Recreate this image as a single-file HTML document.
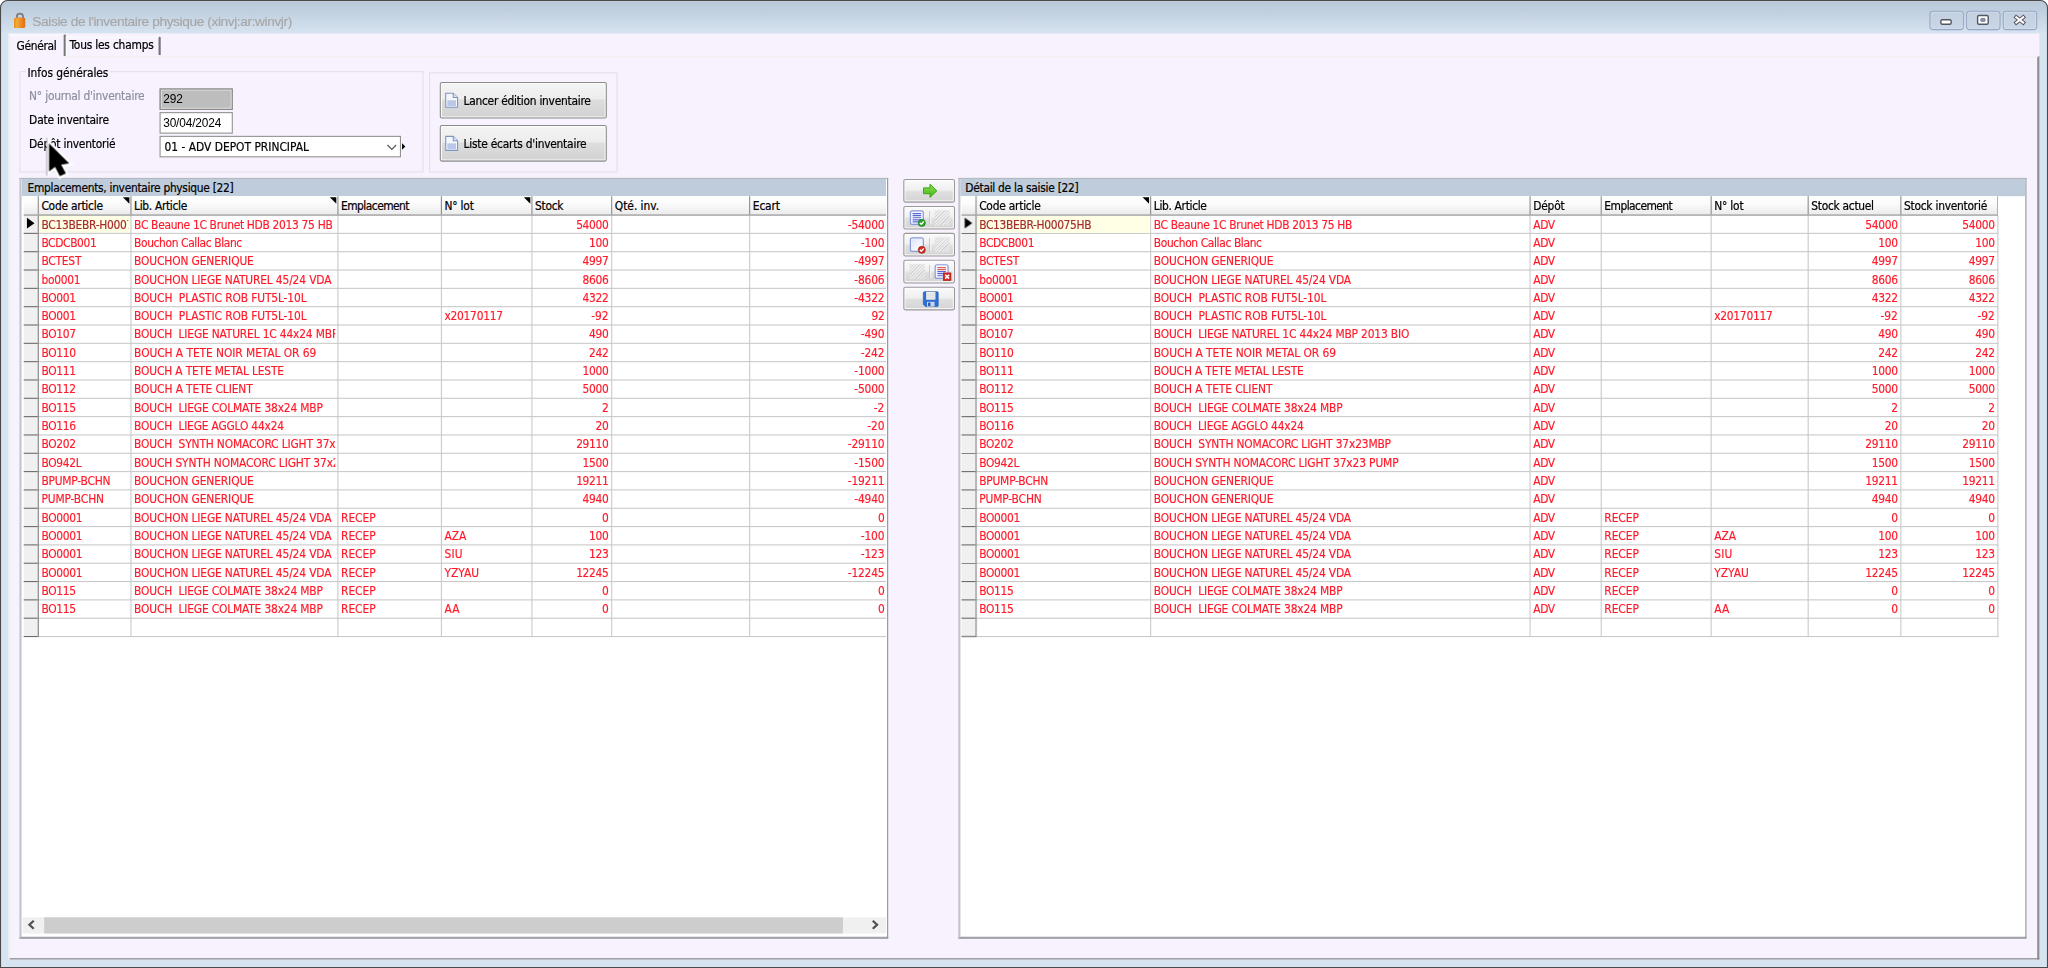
<!DOCTYPE html>
<html lang="fr"><head><meta charset="utf-8"><title>Saisie de l'inventaire physique</title>
<style>
html,body{margin:0;padding:0;}
body{width:2048px;height:968px;overflow:hidden;background:#fff;position:relative;font-family:"DejaVu Sans Condensed","Liberation Sans",sans-serif;}
#root{position:absolute;left:0;top:0;width:1900px;height:898px;transform:scale(1.0778947,1.0779510);transform-origin:0 0;font-size:11px;color:#000;overflow:hidden;}
#root div{position:absolute;box-sizing:border-box;}
#win{left:0;top:0;width:1900px;height:898px;border:1.2px solid #4a4a4a;border-radius:7px 7px 0 0;background:linear-gradient(#b9c8d9 0px,#c3d2e1 12px,#d6e3f1 30px,#d6e3f1 100%);}
#client{left:8px;top:30.9px;width:1884px;height:858.7px;background:#f7f2fd;}
#title{left:30px;top:11.6px;font-family:"Liberation Sans",sans-serif;font-size:12.7px;line-height:16px;color:#a6a6a6;white-space:pre;letter-spacing:-0.36px;-webkit-text-stroke:0.12px #a6a6a6;}
.cap{top:9.9px;width:32px;height:18px;border:1.2px solid #98a8c4;border-radius:3.5px;background:linear-gradient(#c2cfe0,#cad7e7);box-shadow:inset 0 0 0 0.8px #d3deec;}
/* tabs */
#tabline{left:8px;top:51.5px;width:1884px;height:1px;background:#fbfbfb;}
#tabpanelL{left:7.5px;top:30.9px;width:2.2px;height:859px;background:#f1f1f1;}
#tabpanelR{left:1890.3px;top:52px;width:1.4px;height:838px;background:#8d8d8d;}
#tabpanelB{left:8.5px;top:888.6px;width:1883.5px;height:1.3px;background:#7d7d7d;}
.tab{top:36.2px;height:16px;line-height:14px;font-size:11px;white-space:pre;-webkit-text-stroke:0.2px #000;}
.lbl{-webkit-text-stroke:0.18px currentColor;font-size:11px;line-height:14px;white-space:pre;margin-top:0.8px;}
.gb{border:1px solid #e4dfe9;}
.fld{border:1px solid #8f8f8f;background:#fff;font-family:"Liberation Sans",sans-serif;font-size:11px;line-height:16px;padding-left:3px;}
.btn{border:1px solid #8c8c8c;border-radius:2px;background:linear-gradient(#f4f4f4 0%,#ededed 45%,#dddddd 50%,#d2d2d2 100%);box-shadow:inset 0 0 0 1px #fbfbfb;}
.btxt{-webkit-text-stroke:0.18px #000;font-size:11px;line-height:14px;white-space:pre;margin-top:0.8px;}
/* panels */
.panel{background:#fff;border-left:2px solid #c3c3cc;border-top:1px solid #b0b4bc;border-right:1.4px solid #8e8e96;border-bottom:2px solid #a1a1a8;}
.band{background:#bfccdb;height:16.2px;}
.bandt{-webkit-text-stroke:0.18px #000;font-size:11px;line-height:14px;white-space:pre;margin-top:1px;}
.gh{background:linear-gradient(#ffffff 0%,#fafafa 45%,#ebebeb 100%);}
.ind{background:#f0f0f0;}
.cur{background:#ffffe6;}
.hl{height:1px;background:#c9c9c9;}
.hld{height:1px;background:#6a6a6a;}
.vl{width:1px;background:#c9c9c9;}
.vld{width:1px;background:#7a7a7a;}
.hvl{width:1px;background:#8a8a8a;}
.hbl{height:1.5px;background:#858585;margin-top:0.5px;}
.ht{height:17px;line-height:20px;padding-left:0.4px;-webkit-text-stroke:0.2px #000;font-size:11px;white-space:pre;overflow:hidden;color:#000;}
.tri{width:0;height:0;border-top:6px solid #000;border-left:6px solid transparent;}
.ptr{width:0;height:0;border-left:7.3px solid #000;border-top:5.5px solid transparent;border-bottom:5.5px solid transparent;}
.c{height:16px;line-height:18px;font-size:11px;white-space:pre;overflow:hidden;color:#ff1a2a;padding-left:2.4px;-webkit-text-stroke:0.15px #ff1a2a;}
.c.r{text-align:right;padding-left:0;padding-right:2.5px;}
.c.cu{color:#a52a2a;-webkit-text-stroke:0.15px #a52a2a;}
.sbtn{left:838px;width:47.6px;height:21.6px;border:1px solid #9a9a9a;border-radius:2px;background:linear-gradient(#fafafa 0%,#f0f0f0 45%,#dfdfdf 55%,#d4d4d4 100%);box-shadow:inset 0 0 0 1px #fdfdfd;}
#root svg{position:absolute;overflow:visible;}
.hatch{width:14.5px;height:14px;background:repeating-linear-gradient(135deg,#d2d2d2 0,#d2d2d2 0.8px,#ececec 0.8px,#ececec 2.2px);opacity:.85;}
.combo{-webkit-text-stroke:0.18px #000;font-size:11px;line-height:18px;white-space:pre;margin-top:0.7px;}

</style></head>
<body>
<div id="root">
<div id="win"></div>
<div id="client"></div>
<svg style="left:12px;top:11px" width="13" height="16" viewBox="0 0 13 16"><defs><linearGradient id="lk" x1="0" y1="0" x2="1" y2="0"><stop offset="0" stop-color="#e88a1c"/><stop offset="0.25" stop-color="#f2ae34"/><stop offset="0.6" stop-color="#ee8a26"/><stop offset="1" stop-color="#d86f18"/></linearGradient></defs><path d="M3.6 7.2 V4.6 a2.9 2.9 0 0 1 5.8 0 V7.2" fill="none" stroke="#7d7d7d" stroke-width="1.7"/><path d="M1 5.6 H11.4 V14 L10.4 15 H1 Z" fill="url(#lk)"/><path d="M4.2 5.2 H8.8 V6.4 H4.2 Z" fill="#ef8e28"/></svg>
<div id="title">Saisie de l'inventaire physique (xinvj:ar:winvjr)</div>
<div class="cap" style="left:1790px"></div>
<div class="cap" style="left:1824px"></div>
<div class="cap" style="left:1858px"></div>
<svg style="left:1790px;top:10px" width="100" height="18" viewBox="0 0 100 18">
<rect x="10.6" y="8.3" width="9.6" height="4.2" rx="1.4" fill="#fff" stroke="#55555f" stroke-width="1.3"/>
<rect x="44.7" y="4.4" width="9.8" height="8.1" rx="1.2" fill="#fff" stroke="#55555f" stroke-width="1.3"/><rect x="47.6" y="7.2" width="4" height="2.6" rx="0.6" fill="#8f9bb4" stroke="#5d6478" stroke-width="0.7"/>
<path d="M80.6 6 L87 11 M87 6 L80.6 11" fill="none" stroke="#55555f" stroke-width="3.7" stroke-linecap="square"/>
<path d="M80.6 6 L87 11 M87 6 L80.6 11" fill="none" stroke="#fff" stroke-width="1.9" stroke-linecap="square"/>
</svg>
<div id="tabpanelL"></div>

<div id="tabpanelR"></div>
<div id="tabpanelB"></div>
<div class="tab" style="left:15.3px;letter-spacing:-0.288px">Général</div>
<div style="left:8.8px;top:31.8px;width:51px;height:1.3px;background:#fbfbfb"></div>
<div style="left:58.9px;top:32.2px;width:2px;height:19.8px;background:linear-gradient(90deg,#8a8a8a,#5c5c5c);border-radius:1px 1px 0 0"></div>
<div class="tab" style="left:64.5px;top:34.8px;letter-spacing:-0.188px">Tous les champs</div>
<div style="left:61px;top:34.1px;width:86px;height:1.1px;background:#fbfbfb"></div>
<div style="left:61px;top:34.1px;width:1.1px;height:17.5px;background:#fbfbfb"></div>
<div style="left:146.6px;top:34.3px;width:2px;height:16.6px;background:linear-gradient(90deg,#8a8a8a,#5c5c5c);border-radius:1px 1px 0 0"></div>
<div style="left:61px;top:51.8px;width:1830px;height:1.1px;background:#f0f0f0"></div>

<!-- group boxes -->
<div class="gb" style="left:18.2px;top:66px;width:375px;height:93.5px"></div>
<div style="left:24px;top:60px;width:78px;height:14px;background:#f7f2fd"></div>
<div class="lbl" style="left:25.5px;top:60.3px;letter-spacing:-0.059px">Infos générales</div>
<div class="lbl" style="left:27px;top:82px;color:#8d8f9e;letter-spacing:-0.197px">N° journal d'inventaire</div>
<div class="lbl" style="left:27px;top:104px;letter-spacing:-0.177px">Date inventaire</div>
<div class="lbl" style="left:27px;top:126px;letter-spacing:-0.197px">Dépôt inventorié</div>
<div class="fld" style="left:148px;top:82px;width:67.8px;height:20px;background:#bdbdbd;border-color:#8a8a8a;box-shadow:inset 0 0 0 1px #e3e3e3;line-height:19px;padding-left:2.4px">292</div>
<div class="fld" style="left:148px;top:104.3px;width:67.8px;height:19.7px;line-height:18.6px;padding-left:2.4px;letter-spacing:-0.12px">30/04/2024</div>
<div class="fld" style="left:148px;top:126.3px;width:224px;height:19.8px"></div>
<div class="combo" style="left:152.6px;top:127.3px;letter-spacing:0.004px">01 - ADV DEPOT PRINCIPAL</div>
<svg style="left:358px;top:133px" width="12" height="8" viewBox="0 0 12 8"><path d="M1.5 1.5 L5.5 5.5 L9.5 1.5" fill="none" stroke="#555" stroke-width="1.1"/></svg>
<div style="left:373px;top:133px;width:0;height:0;border-left:3.5px solid #000;border-top:3.5px solid transparent;border-bottom:3.5px solid transparent"></div>
<div class="gb" style="left:398px;top:67px;width:175px;height:92.5px"></div>
<div class="btn" style="left:408px;top:76px;width:154.7px;height:34px"></div>
<div class="btn" style="left:408px;top:116px;width:154.7px;height:34px"></div>
<svg style="left:412px;top:85px" width="14" height="16" viewBox="0 0 14 16"><path d="M1.5 1.5 H8.5 L12.5 5.5 V14.5 H1.5 Z" fill="#f4f7fc" stroke="#7e94c4" stroke-width="1"/><path d="M8.5 1.5 V5.5 H12.5" fill="#dfe7f5" stroke="#7e94c4" stroke-width="1"/><rect x="3" y="8" width="8" height="5.5" fill="#b9c8e8"/></svg>
<svg style="left:412px;top:125px" width="14" height="16" viewBox="0 0 14 16"><path d="M1.5 1.5 H8.5 L12.5 5.5 V14.5 H1.5 Z" fill="#f4f7fc" stroke="#7e94c4" stroke-width="1"/><path d="M8.5 1.5 V5.5 H12.5" fill="#dfe7f5" stroke="#7e94c4" stroke-width="1"/><rect x="3" y="8" width="8" height="5.5" fill="#b9c8e8"/></svg>
<div class="btxt" style="left:430px;top:86px;letter-spacing:-0.227px">Lancer édition inventaire</div>
<div class="btxt" style="left:430px;top:126px;letter-spacing:-0.209px">Liste écarts d'inventaire</div>

<!-- left panel -->
<div class="panel" style="left:18.3px;top:164.5px;width:805.4px;height:706px"></div>
<div class="band" style="left:20.2px;top:165.6px;width:802.3px"></div>
<div class="bandt" style="left:25.5px;top:166.5px;letter-spacing:-0.270px">Emplacements, inventaire physique [22]</div>
<div id="lclip" style="left:20.5px;top:0;width:801.8px;height:898px;overflow:hidden"><div style="left:-20.5px;top:0;width:1900px;height:898px">
<div class="gh" style="left:21.5px;top:182.3px;width:801.5px;height:17.0px"></div>
<div class="ind" style="left:21.5px;top:200.3px;width:13.5px;height:390.99999999999994px"></div>
<div class="cur" style="left:36px;top:200.3px;width:85px;height:16px"></div>
<div class="hl" style="left:35px;top:216.3px;width:789px"></div>
<div class="hld" style="left:21.5px;top:216.3px;width:13.5px"></div>
<div class="hl" style="left:35px;top:233.3px;width:789px"></div>
<div class="hld" style="left:21.5px;top:233.3px;width:13.5px"></div>
<div class="hl" style="left:35px;top:250.3px;width:789px"></div>
<div class="hld" style="left:21.5px;top:250.3px;width:13.5px"></div>
<div class="hl" style="left:35px;top:267.3px;width:789px"></div>
<div class="hld" style="left:21.5px;top:267.3px;width:13.5px"></div>
<div class="hl" style="left:35px;top:284.3px;width:789px"></div>
<div class="hld" style="left:21.5px;top:284.3px;width:13.5px"></div>
<div class="hl" style="left:35px;top:301.3px;width:789px"></div>
<div class="hld" style="left:21.5px;top:301.3px;width:13.5px"></div>
<div class="hl" style="left:35px;top:318.3px;width:789px"></div>
<div class="hld" style="left:21.5px;top:318.3px;width:13.5px"></div>
<div class="hl" style="left:35px;top:335.3px;width:789px"></div>
<div class="hld" style="left:21.5px;top:335.3px;width:13.5px"></div>
<div class="hl" style="left:35px;top:352.3px;width:789px"></div>
<div class="hld" style="left:21.5px;top:352.3px;width:13.5px"></div>
<div class="hl" style="left:35px;top:369.3px;width:789px"></div>
<div class="hld" style="left:21.5px;top:369.3px;width:13.5px"></div>
<div class="hl" style="left:35px;top:386.3px;width:789px"></div>
<div class="hld" style="left:21.5px;top:386.3px;width:13.5px"></div>
<div class="hl" style="left:35px;top:403.3px;width:789px"></div>
<div class="hld" style="left:21.5px;top:403.3px;width:13.5px"></div>
<div class="hl" style="left:35px;top:420.3px;width:789px"></div>
<div class="hld" style="left:21.5px;top:420.3px;width:13.5px"></div>
<div class="hl" style="left:35px;top:437.3px;width:789px"></div>
<div class="hld" style="left:21.5px;top:437.3px;width:13.5px"></div>
<div class="hl" style="left:35px;top:454.3px;width:789px"></div>
<div class="hld" style="left:21.5px;top:454.3px;width:13.5px"></div>
<div class="hl" style="left:35px;top:471.3px;width:789px"></div>
<div class="hld" style="left:21.5px;top:471.3px;width:13.5px"></div>
<div class="hl" style="left:35px;top:488.3px;width:789px"></div>
<div class="hld" style="left:21.5px;top:488.3px;width:13.5px"></div>
<div class="hl" style="left:35px;top:505.3px;width:789px"></div>
<div class="hld" style="left:21.5px;top:505.3px;width:13.5px"></div>
<div class="hl" style="left:35px;top:522.3px;width:789px"></div>
<div class="hld" style="left:21.5px;top:522.3px;width:13.5px"></div>
<div class="hl" style="left:35px;top:539.3px;width:789px"></div>
<div class="hld" style="left:21.5px;top:539.3px;width:13.5px"></div>
<div class="hl" style="left:35px;top:556.3px;width:789px"></div>
<div class="hld" style="left:21.5px;top:556.3px;width:13.5px"></div>
<div class="hl" style="left:35px;top:573.3px;width:789px"></div>
<div class="hld" style="left:21.5px;top:573.3px;width:13.5px"></div>
<div class="hl" style="left:35px;top:590.3px;width:789px"></div>
<div class="hld" style="left:21.5px;top:590.3px;width:13.5px"></div>
<div class="vld" style="left:35px;top:200.3px;height:390.99999999999994px"></div>
<div class="vl" style="left:121px;top:200.3px;height:390.99999999999994px"></div>
<div class="vl" style="left:313px;top:200.3px;height:390.99999999999994px"></div>
<div class="vl" style="left:409px;top:200.3px;height:390.99999999999994px"></div>
<div class="vl" style="left:493px;top:200.3px;height:390.99999999999994px"></div>
<div class="vl" style="left:567px;top:200.3px;height:390.99999999999994px"></div>
<div class="vl" style="left:695px;top:200.3px;height:390.99999999999994px"></div>
<div class="vl" style="left:823px;top:200.3px;height:390.99999999999994px"></div>
<div class="hvl" style="left:35px;top:182.3px;height:17.0px"></div>
<div class="hvl" style="left:121px;top:182.3px;height:17.0px"></div>
<div class="hvl" style="left:313px;top:182.3px;height:17.0px"></div>
<div class="hvl" style="left:409px;top:182.3px;height:17.0px"></div>
<div class="hvl" style="left:493px;top:182.3px;height:17.0px"></div>
<div class="hvl" style="left:567px;top:182.3px;height:17.0px"></div>
<div class="hvl" style="left:695px;top:182.3px;height:17.0px"></div>
<div class="hvl" style="left:823px;top:182.3px;height:17.0px"></div>
<div class="hbl" style="left:21.5px;top:198.3px;width:802.5px"></div>
<div class="ht" style="left:38px;top:182.3px;width:83px;letter-spacing:-0.211px">Code article</div>
<div class="tri" style="left:114px;top:183.3px"></div>
<div class="ht" style="left:124px;top:182.3px;width:189px;letter-spacing:-0.298px">Lib. Article</div>
<div class="tri" style="left:306px;top:183.3px"></div>
<div class="ht" style="left:316px;top:182.3px;width:93px;letter-spacing:-0.491px">Emplacement</div>
<div class="ht" style="left:412px;top:182.3px;width:81px;letter-spacing:-0.195px">N° lot</div>
<div class="tri" style="left:486px;top:183.3px"></div>
<div class="ht" style="left:496px;top:182.3px;width:71px;letter-spacing:-0.278px">Stock</div>
<div class="ht" style="left:570px;top:182.3px;width:125px;letter-spacing:-0.024px">Qté. inv.</div>
<div class="ht" style="left:698px;top:182.3px;width:125px;letter-spacing:-0.141px">Ecart</div>
<div class="ptr" style="left:25.3px;top:202.3px"></div>
<div class="c cu" style="left:36px;top:200.3px;width:83px;letter-spacing:-0.251px">BC13BEBR-H000<span>75HB</span></div>
<div class="c" style="left:122px;top:200.3px;width:189px;letter-spacing:-0.280px">BC Beaune 1C Brunet HDB 2013 75 HB</div>
<div class="c r" style="left:494px;top:200.3px;width:73px;letter-spacing:-0.297px">54000</div>
<div class="c r" style="left:696px;top:200.3px;width:127px;letter-spacing:-0.174px">-54000</div>
<div class="c" style="left:36px;top:217.3px;width:83px;letter-spacing:-0.340px">BCDCB001</div>
<div class="c" style="left:122px;top:217.3px;width:189px;letter-spacing:-0.338px">Bouchon Callac Blanc</div>
<div class="c r" style="left:494px;top:217.3px;width:73px;letter-spacing:-0.297px">100</div>
<div class="c r" style="left:696px;top:217.3px;width:127px;letter-spacing:-0.117px">-100</div>
<div class="c" style="left:36px;top:234.3px;width:83px;letter-spacing:-0.190px">BCTEST</div>
<div class="c" style="left:122px;top:234.3px;width:189px;letter-spacing:-0.117px">BOUCHON GENERIQUE</div>
<div class="c r" style="left:494px;top:234.3px;width:73px;letter-spacing:-0.297px">4997</div>
<div class="c r" style="left:696px;top:234.3px;width:127px;letter-spacing:-0.153px">-4997</div>
<div class="c" style="left:36px;top:251.3px;width:83px;letter-spacing:-0.255px">bo0001</div>
<div class="c" style="left:122px;top:251.3px;width:189px;letter-spacing:-0.132px">BOUCHON LIEGE NATUREL 45/24 VDA</div>
<div class="c r" style="left:494px;top:251.3px;width:73px;letter-spacing:-0.297px">8606</div>
<div class="c r" style="left:696px;top:251.3px;width:127px;letter-spacing:-0.153px">-8606</div>
<div class="c" style="left:36px;top:268.3px;width:83px;letter-spacing:-0.256px">BO001</div>
<div class="c" style="left:122px;top:268.3px;width:189px;letter-spacing:-0.105px">BOUCH  PLASTIC ROB FUT5L-10L</div>
<div class="c r" style="left:494px;top:268.3px;width:73px;letter-spacing:-0.297px">4322</div>
<div class="c r" style="left:696px;top:268.3px;width:127px;letter-spacing:-0.153px">-4322</div>
<div class="c" style="left:36px;top:285.3px;width:83px;letter-spacing:-0.256px">BO001</div>
<div class="c" style="left:122px;top:285.3px;width:189px;letter-spacing:-0.105px">BOUCH  PLASTIC ROB FUT5L-10L</div>
<div class="c" style="left:410px;top:285.3px;width:81px;letter-spacing:-0.247px">x20170117</div>
<div class="c r" style="left:494px;top:285.3px;width:73px;letter-spacing:-0.057px">-92</div>
<div class="c r" style="left:696px;top:285.3px;width:127px;letter-spacing:-0.297px">92</div>
<div class="c" style="left:36px;top:302.3px;width:83px;letter-spacing:-0.256px">BO107</div>
<div class="c" style="left:122px;top:302.3px;width:189px;letter-spacing:-0.147px">BOUCH  LIEGE NATUREL 1C 44x24 MBP 2013 BIO</div>
<div class="c r" style="left:494px;top:302.3px;width:73px;letter-spacing:-0.297px">490</div>
<div class="c r" style="left:696px;top:302.3px;width:127px;letter-spacing:-0.117px">-490</div>
<div class="c" style="left:36px;top:319.3px;width:83px;letter-spacing:-0.256px">BO110</div>
<div class="c" style="left:122px;top:319.3px;width:189px;letter-spacing:-0.059px">BOUCH A TETE NOIR METAL OR 69</div>
<div class="c r" style="left:494px;top:319.3px;width:73px;letter-spacing:-0.297px">242</div>
<div class="c r" style="left:696px;top:319.3px;width:127px;letter-spacing:-0.117px">-242</div>
<div class="c" style="left:36px;top:336.3px;width:83px;letter-spacing:-0.256px">BO111</div>
<div class="c" style="left:122px;top:336.3px;width:189px;letter-spacing:-0.146px">BOUCH A TETE METAL LESTE</div>
<div class="c r" style="left:494px;top:336.3px;width:73px;letter-spacing:-0.297px">1000</div>
<div class="c r" style="left:696px;top:336.3px;width:127px;letter-spacing:-0.153px">-1000</div>
<div class="c" style="left:36px;top:353.3px;width:83px;letter-spacing:-0.256px">BO112</div>
<div class="c" style="left:122px;top:353.3px;width:189px;letter-spacing:-0.095px">BOUCH A TETE CLIENT</div>
<div class="c r" style="left:494px;top:353.3px;width:73px;letter-spacing:-0.297px">5000</div>
<div class="c r" style="left:696px;top:353.3px;width:127px;letter-spacing:-0.153px">-5000</div>
<div class="c" style="left:36px;top:370.3px;width:83px;letter-spacing:-0.256px">BO115</div>
<div class="c" style="left:122px;top:370.3px;width:189px;letter-spacing:-0.153px">BOUCH  LIEGE COLMATE 38x24 MBP</div>
<div class="c r" style="left:494px;top:370.3px;width:73px;letter-spacing:-0.297px">2</div>
<div class="c r" style="left:696px;top:370.3px;width:127px;letter-spacing:0.062px">-2</div>
<div class="c" style="left:36px;top:387.3px;width:83px;letter-spacing:-0.256px">BO116</div>
<div class="c" style="left:122px;top:387.3px;width:189px;letter-spacing:-0.167px">BOUCH  LIEGE AGGLO 44x24</div>
<div class="c r" style="left:494px;top:387.3px;width:73px;letter-spacing:-0.297px">20</div>
<div class="c r" style="left:696px;top:387.3px;width:127px;letter-spacing:-0.057px">-20</div>
<div class="c" style="left:36px;top:404.3px;width:83px;letter-spacing:-0.256px">BO202</div>
<div class="c" style="left:122px;top:404.3px;width:189px;letter-spacing:-0.141px">BOUCH  SYNTH NOMACORC LIGHT 37x23MBP</div>
<div class="c r" style="left:494px;top:404.3px;width:73px;letter-spacing:-0.297px">29110</div>
<div class="c r" style="left:696px;top:404.3px;width:127px;letter-spacing:-0.174px">-29110</div>
<div class="c" style="left:36px;top:421.3px;width:83px;letter-spacing:-0.297px">BO942L</div>
<div class="c" style="left:122px;top:421.3px;width:189px;letter-spacing:-0.122px">BOUCH SYNTH NOMACORC LIGHT 37x23 PUMP</div>
<div class="c r" style="left:494px;top:421.3px;width:73px;letter-spacing:-0.297px">1500</div>
<div class="c r" style="left:696px;top:421.3px;width:127px;letter-spacing:-0.153px">-1500</div>
<div class="c" style="left:36px;top:438.3px;width:83px;letter-spacing:-0.181px">BPUMP-BCHN</div>
<div class="c" style="left:122px;top:438.3px;width:189px;letter-spacing:-0.117px">BOUCHON GENERIQUE</div>
<div class="c r" style="left:494px;top:438.3px;width:73px;letter-spacing:-0.297px">19211</div>
<div class="c r" style="left:696px;top:438.3px;width:127px;letter-spacing:-0.174px">-19211</div>
<div class="c" style="left:36px;top:455.3px;width:83px;letter-spacing:-0.113px">PUMP-BCHN</div>
<div class="c" style="left:122px;top:455.3px;width:189px;letter-spacing:-0.117px">BOUCHON GENERIQUE</div>
<div class="c r" style="left:494px;top:455.3px;width:73px;letter-spacing:-0.297px">4940</div>
<div class="c r" style="left:696px;top:455.3px;width:127px;letter-spacing:-0.153px">-4940</div>
<div class="c" style="left:36px;top:472.3px;width:83px;letter-spacing:-0.263px">BO0001</div>
<div class="c" style="left:122px;top:472.3px;width:189px;letter-spacing:-0.132px">BOUCHON LIEGE NATUREL 45/24 VDA</div>
<div class="c" style="left:314px;top:472.3px;width:93px;letter-spacing:-0.053px">RECEP</div>
<div class="c r" style="left:494px;top:472.3px;width:73px;letter-spacing:-0.297px">0</div>
<div class="c r" style="left:696px;top:472.3px;width:127px;letter-spacing:-0.297px">0</div>
<div class="c" style="left:36px;top:489.3px;width:83px;letter-spacing:-0.263px">BO0001</div>
<div class="c" style="left:122px;top:489.3px;width:189px;letter-spacing:-0.132px">BOUCHON LIEGE NATUREL 45/24 VDA</div>
<div class="c" style="left:314px;top:489.3px;width:93px;letter-spacing:-0.053px">RECEP</div>
<div class="c" style="left:410px;top:489.3px;width:81px;letter-spacing:-0.109px">AZA</div>
<div class="c r" style="left:494px;top:489.3px;width:73px;letter-spacing:-0.297px">100</div>
<div class="c r" style="left:696px;top:489.3px;width:127px;letter-spacing:-0.117px">-100</div>
<div class="c" style="left:36px;top:506.3px;width:83px;letter-spacing:-0.263px">BO0001</div>
<div class="c" style="left:122px;top:506.3px;width:189px;letter-spacing:-0.132px">BOUCHON LIEGE NATUREL 45/24 VDA</div>
<div class="c" style="left:314px;top:506.3px;width:93px;letter-spacing:-0.053px">RECEP</div>
<div class="c" style="left:410px;top:506.3px;width:81px;letter-spacing:0.182px">SIU</div>
<div class="c r" style="left:494px;top:506.3px;width:73px;letter-spacing:-0.297px">123</div>
<div class="c r" style="left:696px;top:506.3px;width:127px;letter-spacing:-0.117px">-123</div>
<div class="c" style="left:36px;top:523.3px;width:83px;letter-spacing:-0.263px">BO0001</div>
<div class="c" style="left:122px;top:523.3px;width:189px;letter-spacing:-0.132px">BOUCHON LIEGE NATUREL 45/24 VDA</div>
<div class="c" style="left:314px;top:523.3px;width:93px;letter-spacing:-0.053px">RECEP</div>
<div class="c" style="left:410px;top:523.3px;width:81px;letter-spacing:-0.006px">YZYAU</div>
<div class="c r" style="left:494px;top:523.3px;width:73px;letter-spacing:-0.297px">12245</div>
<div class="c r" style="left:696px;top:523.3px;width:127px;letter-spacing:-0.174px">-12245</div>
<div class="c" style="left:36px;top:540.3px;width:83px;letter-spacing:-0.256px">BO115</div>
<div class="c" style="left:122px;top:540.3px;width:189px;letter-spacing:-0.153px">BOUCH  LIEGE COLMATE 38x24 MBP</div>
<div class="c" style="left:314px;top:540.3px;width:93px;letter-spacing:-0.053px">RECEP</div>
<div class="c r" style="left:494px;top:540.3px;width:73px;letter-spacing:-0.297px">0</div>
<div class="c r" style="left:696px;top:540.3px;width:127px;letter-spacing:-0.297px">0</div>
<div class="c" style="left:36px;top:557.3px;width:83px;letter-spacing:-0.256px">BO115</div>
<div class="c" style="left:122px;top:557.3px;width:189px;letter-spacing:-0.153px">BOUCH  LIEGE COLMATE 38x24 MBP</div>
<div class="c" style="left:314px;top:557.3px;width:93px;letter-spacing:-0.053px">RECEP</div>
<div class="c" style="left:410px;top:557.3px;width:81px;letter-spacing:0.078px">AA</div>
<div class="c r" style="left:494px;top:557.3px;width:73px;letter-spacing:-0.297px">0</div>
<div class="c r" style="left:696px;top:557.3px;width:127px;letter-spacing:-0.297px">0</div>
</div></div>
<!-- left scrollbar -->
<div style="left:20.6px;top:851.2px;width:801.6px;height:15px;background:#f0f0f0"></div>
<div style="left:40.8px;top:851.2px;width:741px;height:15px;background:#cdcdcd"></div>
<svg style="left:25px;top:853.3px" width="8" height="10" viewBox="0 0 8 10"><path d="M6.3 1.2 L2.3 4.9 L6.3 8.6" fill="none" stroke="#505050" stroke-width="2.1"/></svg>
<svg style="left:808px;top:853.3px" width="8" height="10" viewBox="0 0 8 10"><path d="M1.7 1.2 L5.7 4.9 L1.7 8.6" fill="none" stroke="#505050" stroke-width="2.1"/></svg>

<!-- middle buttons -->
<div class="sbtn" style="top:166.2px"></div>
<div class="sbtn" style="top:191.2px"></div>
<div class="sbtn" style="top:216.2px"></div>
<div class="sbtn" style="top:241.2px"></div>
<div class="sbtn" style="top:266px"></div>
<svg style="left:856.3px;top:169.8px" width="14" height="14" viewBox="0 0 14 14"><defs><linearGradient id="ga" x1="0" y1="0" x2="0" y2="1"><stop offset="0" stop-color="#8fe24f"/><stop offset="1" stop-color="#3fb416"/></linearGradient></defs><path d="M0.8 4.3 H6.8 V0.9 L13.2 7 L6.8 13.1 V9.7 H0.8 Z" fill="url(#ga)" stroke="#3aa016" stroke-width="0.9" stroke-linejoin="round"/></svg>
<svg style="left:843.8px;top:194.8px" width="16" height="16" viewBox="0 0 16 16"><rect x="0.6" y="0.6" width="12" height="12.6" rx="1.8" fill="#eef2ff" stroke="#8a9ad8" stroke-width="1.1"/><rect x="2" y="2" width="9.2" height="9.8" fill="#fff"/><path d="M2.6 3.2H10.6M2.6 5.1H10.6M2.6 7H10.6M2.6 8.9H10.6M2.6 10.8H10.6" stroke="#5a66d6" stroke-width="1.1"/><circle cx="11.2" cy="11.8" r="3.3" fill="#2ca02c" stroke="#1d7a1d" stroke-width="0.6"/><path d="M9.4 11.8 L10.8 13.1 L13.1 10.4" fill="none" stroke="#fff" stroke-width="1.3"/></svg>
<div style="left:861.5px;top:196px;width:1px;height:12px;background:#c4c4c4"></div><div style="left:862.5px;top:196px;width:1px;height:12px;background:#f8f8f8"></div>
<div class="hatch" style="left:866.6px;top:194.9px"></div>
<svg style="left:843.8px;top:219.8px" width="16" height="16" viewBox="0 0 16 16"><defs><linearGradient id="gb1" x1="0" y1="0" x2="1" y2="1"><stop offset="0" stop-color="#dfe8fb"/><stop offset="1" stop-color="#ffffff"/></linearGradient></defs><rect x="0.6" y="0.6" width="12" height="12.6" rx="1.8" fill="#eef2ff" stroke="#8a9ad8" stroke-width="1.1"/><rect x="2" y="2" width="9.2" height="9.8" fill="url(#gb1)"/><circle cx="11.2" cy="11.8" r="3.3" fill="#d62a20" stroke="#9a1a14" stroke-width="0.6"/><path d="M9.4 11.8 L10.8 13.1 L13.1 10.4" fill="none" stroke="#fff" stroke-width="1.3"/></svg>
<div style="left:861.5px;top:221px;width:1px;height:12px;background:#c4c4c4"></div><div style="left:862.5px;top:221px;width:1px;height:12px;background:#f8f8f8"></div>
<div class="hatch" style="left:866.6px;top:219.9px"></div>
<div class="hatch" style="left:843.8px;top:244.9px"></div>
<div style="left:861.5px;top:246px;width:1px;height:12px;background:#c4c4c4"></div><div style="left:862.5px;top:246px;width:1px;height:12px;background:#f8f8f8"></div>
<svg style="left:866.8px;top:244.8px" width="16" height="16" viewBox="0 0 16 16"><rect x="0.6" y="0.6" width="12" height="12.6" rx="1.8" fill="#eef2ff" stroke="#8a9ad8" stroke-width="1.1"/><rect x="2" y="2" width="9.2" height="9.8" fill="#fff"/><path d="M2.6 3.2H10.6M2.6 5.1H10.6" stroke="#e0605a" stroke-width="1.2"/><path d="M2.6 7H10.6M2.6 8.9H10.6M2.6 10.8H10.6" stroke="#5a66d6" stroke-width="1.1"/><rect x="8.2" y="8.2" width="7" height="7" fill="#d8261e" stroke="#a01812" stroke-width="0.6"/><path d="M9.9 9.9 L13.5 13.5 M13.5 9.9 L9.9 13.5" stroke="#fff" stroke-width="1.5"/></svg>
<svg style="left:855.8px;top:269.6px" width="15" height="15" viewBox="0 0 15 15"><path d="M0.6 1.6 Q0.6 0.6 1.6 0.6 H13.4 Q14.4 0.6 14.4 1.6 V13.4 Q14.4 14.4 13.4 14.4 H2.6 L0.6 12.4 Z" fill="#2e6fd2" stroke="#1f58b8" stroke-width="0.6"/><rect x="3.2" y="0.8" width="8.6" height="7.2" fill="#f1f1f1"/><path d="M3.2 2.6H11.8M3.2 4.4H11.8M3.2 6.2H11.8" stroke="#d4d4d4" stroke-width="0.7"/><rect x="4" y="10" width="7" height="4.4" fill="#c9d6ea"/><rect x="5" y="10.8" width="2.2" height="3" fill="#2457a8"/></svg>

<!-- right panel -->
<div class="panel" style="left:888.7px;top:164.5px;width:991.5px;height:706px"></div>
<div class="band" style="left:890.5px;top:165.6px;width:988.5px"></div>
<div class="bandt" style="left:895.5px;top:166.5px;letter-spacing:-0.258px">Détail de la saisie [22]</div>
<div class="gh" style="left:891.5px;top:182.3px;width:961.5px;height:17.0px"></div>
<div class="ind" style="left:891.5px;top:200.3px;width:13.5px;height:390.99999999999994px"></div>
<div class="cur" style="left:906px;top:200.3px;width:161px;height:16px"></div>
<div class="hl" style="left:905px;top:216.3px;width:949px"></div>
<div class="hld" style="left:891.5px;top:216.3px;width:13.5px"></div>
<div class="hl" style="left:905px;top:233.3px;width:949px"></div>
<div class="hld" style="left:891.5px;top:233.3px;width:13.5px"></div>
<div class="hl" style="left:905px;top:250.3px;width:949px"></div>
<div class="hld" style="left:891.5px;top:250.3px;width:13.5px"></div>
<div class="hl" style="left:905px;top:267.3px;width:949px"></div>
<div class="hld" style="left:891.5px;top:267.3px;width:13.5px"></div>
<div class="hl" style="left:905px;top:284.3px;width:949px"></div>
<div class="hld" style="left:891.5px;top:284.3px;width:13.5px"></div>
<div class="hl" style="left:905px;top:301.3px;width:949px"></div>
<div class="hld" style="left:891.5px;top:301.3px;width:13.5px"></div>
<div class="hl" style="left:905px;top:318.3px;width:949px"></div>
<div class="hld" style="left:891.5px;top:318.3px;width:13.5px"></div>
<div class="hl" style="left:905px;top:335.3px;width:949px"></div>
<div class="hld" style="left:891.5px;top:335.3px;width:13.5px"></div>
<div class="hl" style="left:905px;top:352.3px;width:949px"></div>
<div class="hld" style="left:891.5px;top:352.3px;width:13.5px"></div>
<div class="hl" style="left:905px;top:369.3px;width:949px"></div>
<div class="hld" style="left:891.5px;top:369.3px;width:13.5px"></div>
<div class="hl" style="left:905px;top:386.3px;width:949px"></div>
<div class="hld" style="left:891.5px;top:386.3px;width:13.5px"></div>
<div class="hl" style="left:905px;top:403.3px;width:949px"></div>
<div class="hld" style="left:891.5px;top:403.3px;width:13.5px"></div>
<div class="hl" style="left:905px;top:420.3px;width:949px"></div>
<div class="hld" style="left:891.5px;top:420.3px;width:13.5px"></div>
<div class="hl" style="left:905px;top:437.3px;width:949px"></div>
<div class="hld" style="left:891.5px;top:437.3px;width:13.5px"></div>
<div class="hl" style="left:905px;top:454.3px;width:949px"></div>
<div class="hld" style="left:891.5px;top:454.3px;width:13.5px"></div>
<div class="hl" style="left:905px;top:471.3px;width:949px"></div>
<div class="hld" style="left:891.5px;top:471.3px;width:13.5px"></div>
<div class="hl" style="left:905px;top:488.3px;width:949px"></div>
<div class="hld" style="left:891.5px;top:488.3px;width:13.5px"></div>
<div class="hl" style="left:905px;top:505.3px;width:949px"></div>
<div class="hld" style="left:891.5px;top:505.3px;width:13.5px"></div>
<div class="hl" style="left:905px;top:522.3px;width:949px"></div>
<div class="hld" style="left:891.5px;top:522.3px;width:13.5px"></div>
<div class="hl" style="left:905px;top:539.3px;width:949px"></div>
<div class="hld" style="left:891.5px;top:539.3px;width:13.5px"></div>
<div class="hl" style="left:905px;top:556.3px;width:949px"></div>
<div class="hld" style="left:891.5px;top:556.3px;width:13.5px"></div>
<div class="hl" style="left:905px;top:573.3px;width:949px"></div>
<div class="hld" style="left:891.5px;top:573.3px;width:13.5px"></div>
<div class="hl" style="left:905px;top:590.3px;width:949px"></div>
<div class="hld" style="left:891.5px;top:590.3px;width:13.5px"></div>
<div class="vld" style="left:905px;top:200.3px;height:390.99999999999994px"></div>
<div class="vl" style="left:1067px;top:200.3px;height:390.99999999999994px"></div>
<div class="vl" style="left:1419px;top:200.3px;height:390.99999999999994px"></div>
<div class="vl" style="left:1485px;top:200.3px;height:390.99999999999994px"></div>
<div class="vl" style="left:1587px;top:200.3px;height:390.99999999999994px"></div>
<div class="vl" style="left:1677px;top:200.3px;height:390.99999999999994px"></div>
<div class="vl" style="left:1763px;top:200.3px;height:390.99999999999994px"></div>
<div class="vl" style="left:1853px;top:200.3px;height:390.99999999999994px"></div>
<div class="hvl" style="left:905px;top:182.3px;height:17.0px"></div>
<div class="hvl" style="left:1067px;top:182.3px;height:17.0px"></div>
<div class="hvl" style="left:1419px;top:182.3px;height:17.0px"></div>
<div class="hvl" style="left:1485px;top:182.3px;height:17.0px"></div>
<div class="hvl" style="left:1587px;top:182.3px;height:17.0px"></div>
<div class="hvl" style="left:1677px;top:182.3px;height:17.0px"></div>
<div class="hvl" style="left:1763px;top:182.3px;height:17.0px"></div>
<div class="hvl" style="left:1853px;top:182.3px;height:17.0px"></div>
<div class="hbl" style="left:891.5px;top:198.3px;width:962.5px"></div>
<div class="ht" style="left:908px;top:182.3px;width:159px;letter-spacing:-0.211px">Code article</div>
<div class="tri" style="left:1060px;top:183.3px"></div>
<div class="ht" style="left:1070px;top:182.3px;width:349px;letter-spacing:-0.298px">Lib. Article</div>
<div class="ht" style="left:1422px;top:182.3px;width:63px;letter-spacing:-0.188px">Dépôt</div>
<div class="ht" style="left:1488px;top:182.3px;width:99px;letter-spacing:-0.491px">Emplacement</div>
<div class="ht" style="left:1590px;top:182.3px;width:87px;letter-spacing:-0.195px">N° lot</div>
<div class="ht" style="left:1680px;top:182.3px;width:83px;letter-spacing:-0.253px">Stock actuel</div>
<div class="ht" style="left:1766px;top:182.3px;width:87px;letter-spacing:-0.226px">Stock inventorié</div>
<div class="ptr" style="left:895.3px;top:202.3px"></div>
<div class="c cu" style="left:906px;top:200.3px;width:159px;letter-spacing:-0.300px">BC13BEBR-H00075HB</div>
<div class="c" style="left:1068px;top:200.3px;width:349px;letter-spacing:-0.280px">BC Beaune 1C Brunet HDB 2013 75 HB</div>
<div class="c" style="left:1420px;top:200.3px;width:63px;letter-spacing:-0.323px">ADV</div>
<div class="c r" style="left:1678px;top:200.3px;width:85px;letter-spacing:-0.297px">54000</div>
<div class="c r" style="left:1764px;top:200.3px;width:89px;letter-spacing:-0.297px">54000</div>
<div class="c" style="left:906px;top:217.3px;width:159px;letter-spacing:-0.340px">BCDCB001</div>
<div class="c" style="left:1068px;top:217.3px;width:349px;letter-spacing:-0.338px">Bouchon Callac Blanc</div>
<div class="c" style="left:1420px;top:217.3px;width:63px;letter-spacing:-0.323px">ADV</div>
<div class="c r" style="left:1678px;top:217.3px;width:85px;letter-spacing:-0.297px">100</div>
<div class="c r" style="left:1764px;top:217.3px;width:89px;letter-spacing:-0.297px">100</div>
<div class="c" style="left:906px;top:234.3px;width:159px;letter-spacing:-0.190px">BCTEST</div>
<div class="c" style="left:1068px;top:234.3px;width:349px;letter-spacing:-0.117px">BOUCHON GENERIQUE</div>
<div class="c" style="left:1420px;top:234.3px;width:63px;letter-spacing:-0.323px">ADV</div>
<div class="c r" style="left:1678px;top:234.3px;width:85px;letter-spacing:-0.297px">4997</div>
<div class="c r" style="left:1764px;top:234.3px;width:89px;letter-spacing:-0.297px">4997</div>
<div class="c" style="left:906px;top:251.3px;width:159px;letter-spacing:-0.255px">bo0001</div>
<div class="c" style="left:1068px;top:251.3px;width:349px;letter-spacing:-0.132px">BOUCHON LIEGE NATUREL 45/24 VDA</div>
<div class="c" style="left:1420px;top:251.3px;width:63px;letter-spacing:-0.323px">ADV</div>
<div class="c r" style="left:1678px;top:251.3px;width:85px;letter-spacing:-0.297px">8606</div>
<div class="c r" style="left:1764px;top:251.3px;width:89px;letter-spacing:-0.297px">8606</div>
<div class="c" style="left:906px;top:268.3px;width:159px;letter-spacing:-0.256px">BO001</div>
<div class="c" style="left:1068px;top:268.3px;width:349px;letter-spacing:-0.105px">BOUCH  PLASTIC ROB FUT5L-10L</div>
<div class="c" style="left:1420px;top:268.3px;width:63px;letter-spacing:-0.323px">ADV</div>
<div class="c r" style="left:1678px;top:268.3px;width:85px;letter-spacing:-0.297px">4322</div>
<div class="c r" style="left:1764px;top:268.3px;width:89px;letter-spacing:-0.297px">4322</div>
<div class="c" style="left:906px;top:285.3px;width:159px;letter-spacing:-0.256px">BO001</div>
<div class="c" style="left:1068px;top:285.3px;width:349px;letter-spacing:-0.105px">BOUCH  PLASTIC ROB FUT5L-10L</div>
<div class="c" style="left:1420px;top:285.3px;width:63px;letter-spacing:-0.323px">ADV</div>
<div class="c" style="left:1588px;top:285.3px;width:87px;letter-spacing:-0.247px">x20170117</div>
<div class="c r" style="left:1678px;top:285.3px;width:85px;letter-spacing:-0.057px">-92</div>
<div class="c r" style="left:1764px;top:285.3px;width:89px;letter-spacing:-0.057px">-92</div>
<div class="c" style="left:906px;top:302.3px;width:159px;letter-spacing:-0.256px">BO107</div>
<div class="c" style="left:1068px;top:302.3px;width:349px;letter-spacing:-0.147px">BOUCH  LIEGE NATUREL 1C 44x24 MBP 2013 BIO</div>
<div class="c" style="left:1420px;top:302.3px;width:63px;letter-spacing:-0.323px">ADV</div>
<div class="c r" style="left:1678px;top:302.3px;width:85px;letter-spacing:-0.297px">490</div>
<div class="c r" style="left:1764px;top:302.3px;width:89px;letter-spacing:-0.297px">490</div>
<div class="c" style="left:906px;top:319.3px;width:159px;letter-spacing:-0.256px">BO110</div>
<div class="c" style="left:1068px;top:319.3px;width:349px;letter-spacing:-0.059px">BOUCH A TETE NOIR METAL OR 69</div>
<div class="c" style="left:1420px;top:319.3px;width:63px;letter-spacing:-0.323px">ADV</div>
<div class="c r" style="left:1678px;top:319.3px;width:85px;letter-spacing:-0.297px">242</div>
<div class="c r" style="left:1764px;top:319.3px;width:89px;letter-spacing:-0.297px">242</div>
<div class="c" style="left:906px;top:336.3px;width:159px;letter-spacing:-0.256px">BO111</div>
<div class="c" style="left:1068px;top:336.3px;width:349px;letter-spacing:-0.146px">BOUCH A TETE METAL LESTE</div>
<div class="c" style="left:1420px;top:336.3px;width:63px;letter-spacing:-0.323px">ADV</div>
<div class="c r" style="left:1678px;top:336.3px;width:85px;letter-spacing:-0.297px">1000</div>
<div class="c r" style="left:1764px;top:336.3px;width:89px;letter-spacing:-0.297px">1000</div>
<div class="c" style="left:906px;top:353.3px;width:159px;letter-spacing:-0.256px">BO112</div>
<div class="c" style="left:1068px;top:353.3px;width:349px;letter-spacing:-0.095px">BOUCH A TETE CLIENT</div>
<div class="c" style="left:1420px;top:353.3px;width:63px;letter-spacing:-0.323px">ADV</div>
<div class="c r" style="left:1678px;top:353.3px;width:85px;letter-spacing:-0.297px">5000</div>
<div class="c r" style="left:1764px;top:353.3px;width:89px;letter-spacing:-0.297px">5000</div>
<div class="c" style="left:906px;top:370.3px;width:159px;letter-spacing:-0.256px">BO115</div>
<div class="c" style="left:1068px;top:370.3px;width:349px;letter-spacing:-0.153px">BOUCH  LIEGE COLMATE 38x24 MBP</div>
<div class="c" style="left:1420px;top:370.3px;width:63px;letter-spacing:-0.323px">ADV</div>
<div class="c r" style="left:1678px;top:370.3px;width:85px;letter-spacing:-0.297px">2</div>
<div class="c r" style="left:1764px;top:370.3px;width:89px;letter-spacing:-0.297px">2</div>
<div class="c" style="left:906px;top:387.3px;width:159px;letter-spacing:-0.256px">BO116</div>
<div class="c" style="left:1068px;top:387.3px;width:349px;letter-spacing:-0.167px">BOUCH  LIEGE AGGLO 44x24</div>
<div class="c" style="left:1420px;top:387.3px;width:63px;letter-spacing:-0.323px">ADV</div>
<div class="c r" style="left:1678px;top:387.3px;width:85px;letter-spacing:-0.297px">20</div>
<div class="c r" style="left:1764px;top:387.3px;width:89px;letter-spacing:-0.297px">20</div>
<div class="c" style="left:906px;top:404.3px;width:159px;letter-spacing:-0.256px">BO202</div>
<div class="c" style="left:1068px;top:404.3px;width:349px;letter-spacing:-0.141px">BOUCH  SYNTH NOMACORC LIGHT 37x23MBP</div>
<div class="c" style="left:1420px;top:404.3px;width:63px;letter-spacing:-0.323px">ADV</div>
<div class="c r" style="left:1678px;top:404.3px;width:85px;letter-spacing:-0.297px">29110</div>
<div class="c r" style="left:1764px;top:404.3px;width:89px;letter-spacing:-0.297px">29110</div>
<div class="c" style="left:906px;top:421.3px;width:159px;letter-spacing:-0.297px">BO942L</div>
<div class="c" style="left:1068px;top:421.3px;width:349px;letter-spacing:-0.122px">BOUCH SYNTH NOMACORC LIGHT 37x23 PUMP</div>
<div class="c" style="left:1420px;top:421.3px;width:63px;letter-spacing:-0.323px">ADV</div>
<div class="c r" style="left:1678px;top:421.3px;width:85px;letter-spacing:-0.297px">1500</div>
<div class="c r" style="left:1764px;top:421.3px;width:89px;letter-spacing:-0.297px">1500</div>
<div class="c" style="left:906px;top:438.3px;width:159px;letter-spacing:-0.181px">BPUMP-BCHN</div>
<div class="c" style="left:1068px;top:438.3px;width:349px;letter-spacing:-0.117px">BOUCHON GENERIQUE</div>
<div class="c" style="left:1420px;top:438.3px;width:63px;letter-spacing:-0.323px">ADV</div>
<div class="c r" style="left:1678px;top:438.3px;width:85px;letter-spacing:-0.297px">19211</div>
<div class="c r" style="left:1764px;top:438.3px;width:89px;letter-spacing:-0.297px">19211</div>
<div class="c" style="left:906px;top:455.3px;width:159px;letter-spacing:-0.113px">PUMP-BCHN</div>
<div class="c" style="left:1068px;top:455.3px;width:349px;letter-spacing:-0.117px">BOUCHON GENERIQUE</div>
<div class="c" style="left:1420px;top:455.3px;width:63px;letter-spacing:-0.323px">ADV</div>
<div class="c r" style="left:1678px;top:455.3px;width:85px;letter-spacing:-0.297px">4940</div>
<div class="c r" style="left:1764px;top:455.3px;width:89px;letter-spacing:-0.297px">4940</div>
<div class="c" style="left:906px;top:472.3px;width:159px;letter-spacing:-0.263px">BO0001</div>
<div class="c" style="left:1068px;top:472.3px;width:349px;letter-spacing:-0.132px">BOUCHON LIEGE NATUREL 45/24 VDA</div>
<div class="c" style="left:1420px;top:472.3px;width:63px;letter-spacing:-0.323px">ADV</div>
<div class="c" style="left:1486px;top:472.3px;width:99px;letter-spacing:-0.053px">RECEP</div>
<div class="c r" style="left:1678px;top:472.3px;width:85px;letter-spacing:-0.297px">0</div>
<div class="c r" style="left:1764px;top:472.3px;width:89px;letter-spacing:-0.297px">0</div>
<div class="c" style="left:906px;top:489.3px;width:159px;letter-spacing:-0.263px">BO0001</div>
<div class="c" style="left:1068px;top:489.3px;width:349px;letter-spacing:-0.132px">BOUCHON LIEGE NATUREL 45/24 VDA</div>
<div class="c" style="left:1420px;top:489.3px;width:63px;letter-spacing:-0.323px">ADV</div>
<div class="c" style="left:1486px;top:489.3px;width:99px;letter-spacing:-0.053px">RECEP</div>
<div class="c" style="left:1588px;top:489.3px;width:87px;letter-spacing:-0.109px">AZA</div>
<div class="c r" style="left:1678px;top:489.3px;width:85px;letter-spacing:-0.297px">100</div>
<div class="c r" style="left:1764px;top:489.3px;width:89px;letter-spacing:-0.297px">100</div>
<div class="c" style="left:906px;top:506.3px;width:159px;letter-spacing:-0.263px">BO0001</div>
<div class="c" style="left:1068px;top:506.3px;width:349px;letter-spacing:-0.132px">BOUCHON LIEGE NATUREL 45/24 VDA</div>
<div class="c" style="left:1420px;top:506.3px;width:63px;letter-spacing:-0.323px">ADV</div>
<div class="c" style="left:1486px;top:506.3px;width:99px;letter-spacing:-0.053px">RECEP</div>
<div class="c" style="left:1588px;top:506.3px;width:87px;letter-spacing:0.182px">SIU</div>
<div class="c r" style="left:1678px;top:506.3px;width:85px;letter-spacing:-0.297px">123</div>
<div class="c r" style="left:1764px;top:506.3px;width:89px;letter-spacing:-0.297px">123</div>
<div class="c" style="left:906px;top:523.3px;width:159px;letter-spacing:-0.263px">BO0001</div>
<div class="c" style="left:1068px;top:523.3px;width:349px;letter-spacing:-0.132px">BOUCHON LIEGE NATUREL 45/24 VDA</div>
<div class="c" style="left:1420px;top:523.3px;width:63px;letter-spacing:-0.323px">ADV</div>
<div class="c" style="left:1486px;top:523.3px;width:99px;letter-spacing:-0.053px">RECEP</div>
<div class="c" style="left:1588px;top:523.3px;width:87px;letter-spacing:-0.006px">YZYAU</div>
<div class="c r" style="left:1678px;top:523.3px;width:85px;letter-spacing:-0.297px">12245</div>
<div class="c r" style="left:1764px;top:523.3px;width:89px;letter-spacing:-0.297px">12245</div>
<div class="c" style="left:906px;top:540.3px;width:159px;letter-spacing:-0.256px">BO115</div>
<div class="c" style="left:1068px;top:540.3px;width:349px;letter-spacing:-0.153px">BOUCH  LIEGE COLMATE 38x24 MBP</div>
<div class="c" style="left:1420px;top:540.3px;width:63px;letter-spacing:-0.323px">ADV</div>
<div class="c" style="left:1486px;top:540.3px;width:99px;letter-spacing:-0.053px">RECEP</div>
<div class="c r" style="left:1678px;top:540.3px;width:85px;letter-spacing:-0.297px">0</div>
<div class="c r" style="left:1764px;top:540.3px;width:89px;letter-spacing:-0.297px">0</div>
<div class="c" style="left:906px;top:557.3px;width:159px;letter-spacing:-0.256px">BO115</div>
<div class="c" style="left:1068px;top:557.3px;width:349px;letter-spacing:-0.153px">BOUCH  LIEGE COLMATE 38x24 MBP</div>
<div class="c" style="left:1420px;top:557.3px;width:63px;letter-spacing:-0.323px">ADV</div>
<div class="c" style="left:1486px;top:557.3px;width:99px;letter-spacing:-0.053px">RECEP</div>
<div class="c" style="left:1588px;top:557.3px;width:87px;letter-spacing:0.078px">AA</div>
<div class="c r" style="left:1678px;top:557.3px;width:85px;letter-spacing:-0.297px">0</div>
<div class="c r" style="left:1764px;top:557.3px;width:89px;letter-spacing:-0.297px">0</div>

<!-- mouse cursor -->
<svg style="left:43.4px;top:126.9px" width="30" height="42" viewBox="0 0 30 42"><path d="M2.5 5.9 V32.1 L8.1 27.7 L12.5 36.4 L18.1 33.9 L13.7 25.8 L21.2 24.6 Z" fill="#000" stroke="#fff" stroke-width="4.2" stroke-linejoin="miter" stroke-miterlimit="30"/><path d="M2.5 5.9 V32.1 L8.1 27.7 L12.5 36.4 L18.1 33.9 L13.7 25.8 L21.2 24.6 Z" fill="#000"/><path d="M0.4 1 V36" stroke="#8a8a8a" stroke-width="0.7"/></svg>
</div>

</body></html>
